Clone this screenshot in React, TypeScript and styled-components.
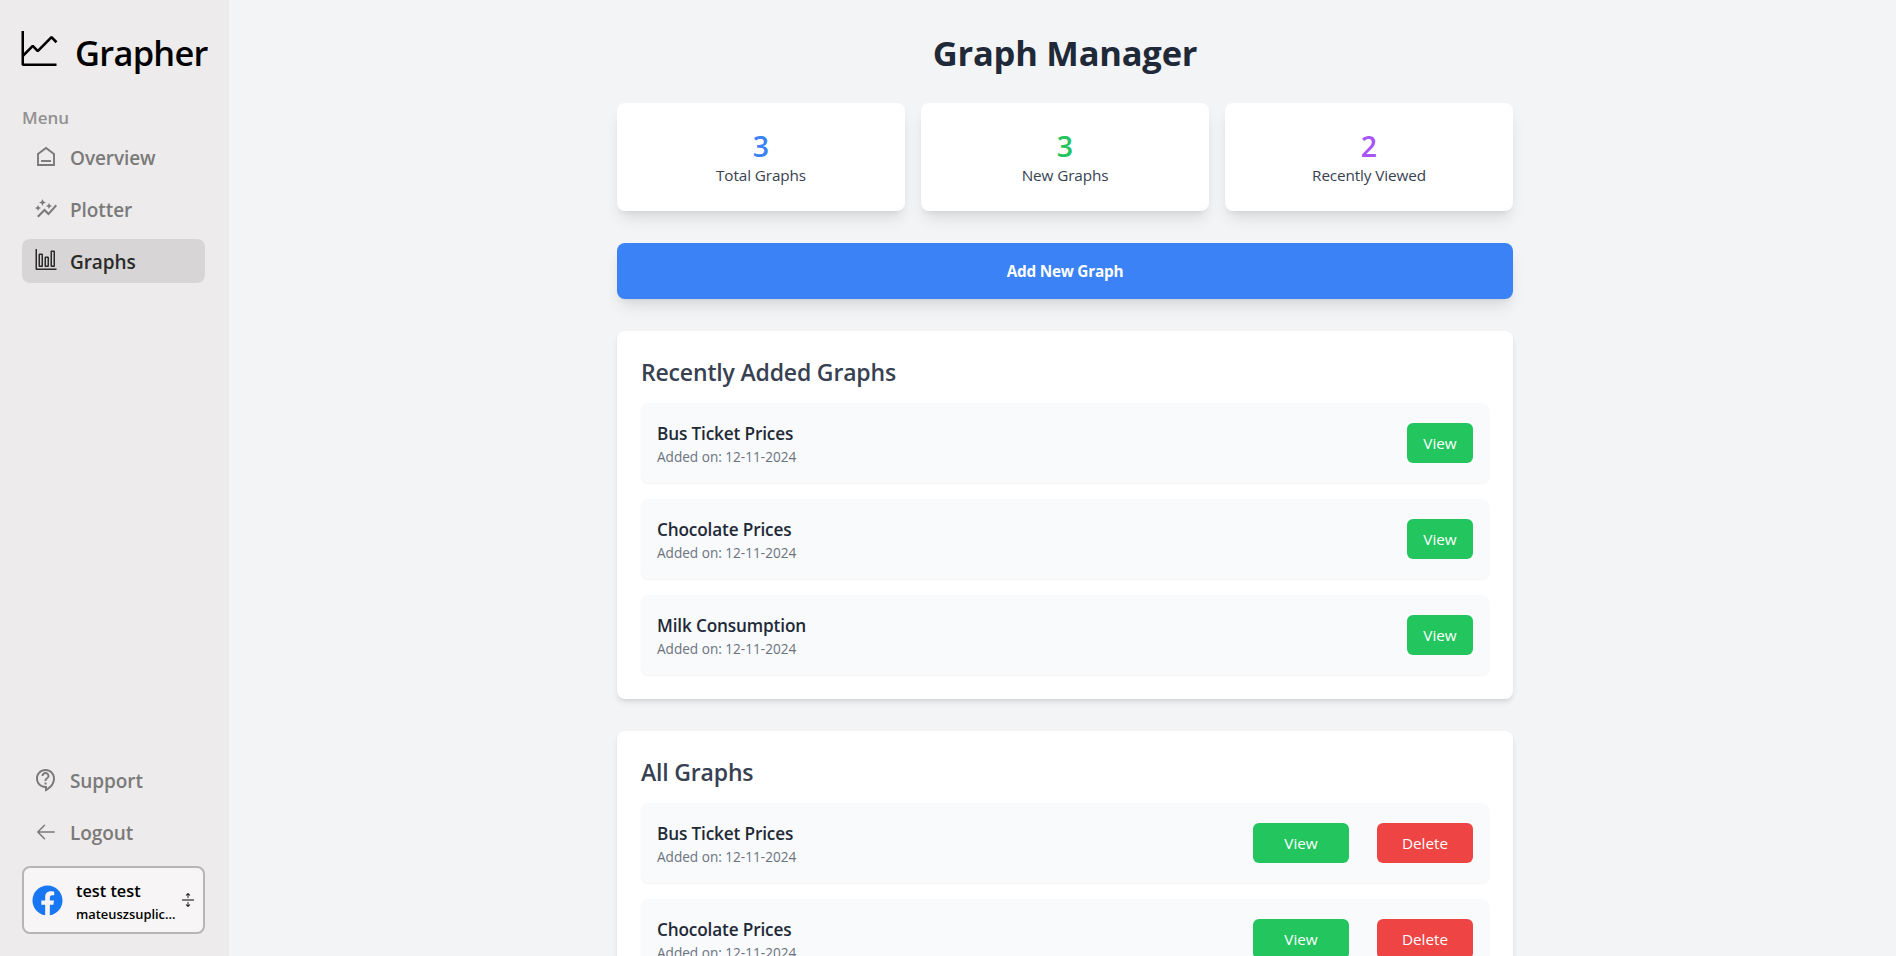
import React from 'react';
import styled, { createGlobalStyle } from 'styled-components';
import { VscGraphLine, VscGraph } from 'react-icons/vsc';
import { MdAutoGraph, MdOutlineContactSupport } from 'react-icons/md';
import { PiArrowLeft } from 'react-icons/pi';
import { BsArrowsExpand } from 'react-icons/bs';
import { FaFacebook } from 'react-icons/fa';

const GlobalStyle = createGlobalStyle`
  *, *::before, *::after { box-sizing: border-box; }
  body {
    margin: 0;
    height: 956px;
    overflow: hidden;
    background: #f3f4f6;
    font-family: 'Segoe UI', 'Open Sans', 'Noto Sans', sans-serif;
    font-size: 15.3px;
    line-height: 24px;
  }
  h1, h2, h3, p { margin: 0; }
  button { border: 0; font: inherit; cursor: pointer; }
  svg { display: block; flex: none; }
`;

const Page = styled.div`
  display: flex;
  height: 956px;
`;

const Sidebar = styled.aside`
  display: flex;
  flex-direction: column;
  flex: none;
  width: 229px;
  padding: 31px 24px 22px 22px;
  background: #edebeb;
`;

const Brand = styled.div`
  display: flex;
  gap: 16px;
  height: 77px;
  margin-left: -3px;
  white-space: nowrap;
  color: #000;
`;

const BrandName = styled.span`
  font-size: 34.4px;
  font-weight: 600;
  letter-spacing: -0.7px;
  line-height: 44px;
`;

const MenuLabel = styled.div`
  height: 27px;
  line-height: 20px;
  font-size: 17px;
  font-weight: 600;
  color: #929191;
`;

const Nav = styled.nav`
  display: flex;
  flex-direction: column;
  gap: 8px;
`;

const BottomNav = styled(Nav)`
  margin-top: auto;
`;

const NavItem = styled.a<{ $active?: boolean }>`
  display: flex;
  align-items: center;
  gap: 12px;
  height: 44px;
  padding-left: 12px;
  border-radius: 8px;
  font-size: 19px;
  font-weight: 600;
  letter-spacing: -0.08px;
  color: ${p => (p.$active ? '#2a2a2a' : '#7b7a7a')};
  background: ${p => (p.$active ? '#d7d5d5' : 'transparent')};
`;

const NavText = styled.span`
  padding-top: 2px;
`;

const Account = styled.div`
  display: flex;
  align-items: center;
  height: 68px;
  margin-top: 12px;
  padding: 0 8px;
  border: 2px solid #b7b5b5;
  border-radius: 8px;
  background: #f7f5f6;
  color: #000;
`;

const AccountText = styled.div`
  width: 101px;
  margin: 0 4px 0 13px;
  padding-top: 4px;
  font-weight: 600;
`;

const AccountName = styled.div`
  font-size: 16.3px;
  line-height: 24px;
`;

const AccountMail = styled.div`
  font-size: 12.9px;
  line-height: 22px;
  white-space: nowrap;
`;

const Main = styled.main`
  flex: 1;
  overflow: hidden;
  padding: 32px 0 0 5px;
`;

const Content = styled.div`
  display: flex;
  flex-direction: column;
  gap: 32px;
  width: 896px;
  margin: 0 auto;
`;

const Title = styled.h1`
  height: 39px;
  line-height: 42px;
  text-align: center;
  font-size: 34.5px;
  font-weight: 700;
  letter-spacing: -0.22px;
  color: #1f2937;
`;

const Stats = styled.div`
  display: grid;
  grid-template-columns: repeat(3, 1fr);
  gap: 16px;
`;

const Stat = styled.div`
  height: 108px;
  padding-top: 27px;
  border-radius: 8px;
  text-align: center;
  background: #fff;
  box-shadow: 0 10px 15px -3px rgba(0, 0, 0, 0.1), 0 4px 6px -4px rgba(0, 0, 0, 0.1);
`;

const StatValue = styled.div<{ $color: string }>`
  height: 33px;
  font-size: 28.5px;
  line-height: 32px;
  font-weight: 600;
  color: ${p => p.$color};
`;

const StatLabel = styled.p`
  letter-spacing: -0.12px;
  color: #374151;
`;

const AddButton = styled.button`
  height: 56px;
  border-radius: 8px;
  font-weight: 700;
  letter-spacing: -0.22px;
  color: #fff;
  background: #3b82f6;
  box-shadow: 0 10px 15px -3px rgba(0, 0, 0, 0.1), 0 4px 6px -4px rgba(0, 0, 0, 0.1);
`;

const Panel = styled.section`
  padding: 24px;
  border-radius: 8px;
  background: #fff;
  box-shadow: 0 4px 6px -1px rgba(0, 0, 0, 0.1), 0 2px 4px -2px rgba(0, 0, 0, 0.1);
`;

const PanelTitle = styled.h2`
  margin-bottom: 14px;
  line-height: 34px;
  font-size: 23px;
  font-weight: 600;
  letter-spacing: -0.17px;
  color: #374151;
`;

const List = styled.div`
  display: flex;
  flex-direction: column;
  gap: 16px;
`;

const Row = styled.div`
  display: flex;
  align-items: center;
  justify-content: space-between;
  height: 80px;
  padding: 0 16px;
  border-radius: 8px;
  background: #f9fafb;
  box-shadow: 0 1px 2px rgba(0, 0, 0, 0.05);
`;

const RowTitle = styled.h3`
  padding-top: 1px;
  line-height: 28px;
  font-size: 17.2px;
  font-weight: 600;
  letter-spacing: -0.15px;
  color: #1f2937;
`;

const RowDate = styled.p`
  margin-top: -1px;
  line-height: 20px;
  font-size: 13.6px;
  color: #6b7280;
`;

const Actions = styled.div`
  display: flex;
  gap: 28px;
`;

const ActionButton = styled.button<{ $danger?: boolean; $wide?: boolean }>`
  width: ${p => (p.$wide ? 96 : 66)}px;
  height: 40px;
  padding: 0;
  border-radius: 6px;
  color: #fff;
  background: ${p => (p.$danger ? '#ef4444' : '#22c55e')};
`;

const graphs = ['Bus Ticket Prices', 'Chocolate Prices', 'Milk Consumption'];
const stats = [
  { value: 3, label: 'Total Graphs', color: '#3b82f6' },
  { value: 3, label: 'New Graphs', color: '#22c55e' },
  { value: 2, label: 'Recently Viewed', color: '#a855f7' },
];

function HomeIcon() {
  return (
    <svg width="24" height="24" viewBox="0 0 24 24" fill="none" stroke="currentColor" strokeWidth="1.9">
      <path d="M4 20V9l8-6 8 6v11z" />
      <path d="M7 16h10" />
    </svg>
  );
}

function GraphPanel({ title, editable }: { title: string; editable?: boolean }) {
  return (
    <Panel>
      <PanelTitle>{title}</PanelTitle>
      <List>
        {graphs.map(name => (
          <Row key={name}>
            <div>
              <RowTitle>{name}</RowTitle>
              <RowDate>Added on: 12-11-2024</RowDate>
            </div>
            <Actions>
              <ActionButton $wide={editable}>View</ActionButton>
              {editable && <ActionButton $wide $danger>Delete</ActionButton>}
            </Actions>
          </Row>
        ))}
      </List>
    </Panel>
  );
}

export default function App() {
  return (
    <Page>
      <GlobalStyle />
      <Sidebar>
        <Brand>
          <VscGraphLine size={40} />
          <BrandName>Grapher</BrandName>
        </Brand>
        <MenuLabel>Menu</MenuLabel>
        <Nav>
          <NavItem><HomeIcon /><NavText>Overview</NavText></NavItem>
          <NavItem><MdAutoGraph size={24} /><NavText>Plotter</NavText></NavItem>
          <NavItem $active><VscGraph size={24} /><NavText>Graphs</NavText></NavItem>
        </Nav>
        <BottomNav>
          <NavItem><MdOutlineContactSupport size={24} /><NavText>Support</NavText></NavItem>
          <NavItem><PiArrowLeft size={24} /><NavText>Logout</NavText></NavItem>
        </BottomNav>
        <Account>
          <FaFacebook size={31} color="#1877f2" />
          <AccountText>
            <AccountName>test test</AccountName>
            <AccountMail>mateuszsuplic...</AccountMail>
          </AccountText>
          <BsArrowsExpand size={14} />
        </Account>
      </Sidebar>
      <Main>
        <Content>
          <Title>Graph Manager</Title>
          <Stats>
            {stats.map(s => (
              <Stat key={s.label}>
                <StatValue $color={s.color}>{s.value}</StatValue>
                <StatLabel>{s.label}</StatLabel>
              </Stat>
            ))}
          </Stats>
          <AddButton>Add New Graph</AddButton>
          <GraphPanel title="Recently Added Graphs" />
          <GraphPanel title="All Graphs" editable />
        </Content>
      </Main>
    </Page>
  );
}
